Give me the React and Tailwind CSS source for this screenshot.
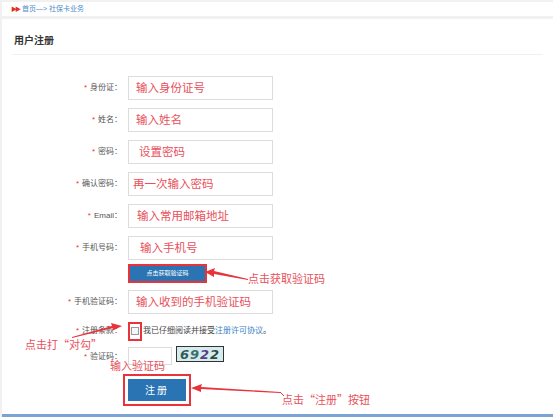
const FONT = { fontFamily: '"Liberation Sans", "Noto Sans CJK SC", sans-serif' }
const CJK = { fontFamily: '"Noto Sans CJK SC", sans-serif' }

const rows = [
  { label: '身份证', ph: '输入身份证号', pl: 'pl-[7px]' },
  { label: '姓名', ph: '输入姓名', pl: 'pl-[7px]' },
  { label: '密码', ph: '设置密码', pl: 'pl-[10px]' },
  { label: '确认密码', ph: '再一次输入密码', pl: 'pl-[4px]' },
  { label: 'Email', ph: '输入常用邮箱地址', pl: 'pl-[8px]' },
  { label: '手机号码', ph: '输入手机号', pl: 'pl-[11px]' },
]

function Label({ children }) {
  return (
    <div className="flex h-full items-center justify-end pr-[6px] text-[8px] text-[#555]">
      <span className="mr-[3px] text-[#e33]">*</span>
      {children}：
    </div>
  )
}

function Field({ ph, pl = 'pl-[7px]' }) {
  return (
    <div className={`flex h-[24px] w-[145px] items-center border border-[#dcdcdc] bg-white text-[11.5px] text-[#e8505b] ${pl}`} style={CJK}>
      {ph}
    </div>
  )
}

function Arrows() {
  return (
    <svg className="pointer-events-none absolute inset-0" width="553" height="417">
      {/* to get-code button */}
      <polygon points="248,280 214,274 214,277 205,272 215,268 214,271 248,279" fill="#e8333b" />
      {/* to checkbox */}
      <polygon points="72,338 113,328 112,331 122,326 111,323 112,326 72,337" fill="#e8333b" />
      {/* to register button */}
      <polygon points="280,393 201,389 201,392 191,388 202,384 201,387 280,392" fill="#e8333b" />
      <line x1="280" y1="392" x2="284" y2="396" stroke="#e8333b" strokeWidth="1" />
    </svg>
  )
}

export default function App() {
  return (
    <div className="relative flex h-[417px] w-[553px] flex-col overflow-hidden bg-[#f1f1f1]" style={FONT}>
      {/* breadcrumb */}
      <div className="ml-[2px] mt-[2px] flex h-[14px] items-center bg-white pl-[9px] text-[7px] text-[#4a8bc9]">
        <span className="mr-[3px] text-[6px] tracking-[-2px] text-[#e0301e]">▶▶</span>
        <span>首页—&gt; 社保卡业务</span>
      </div>

      {/* panel */}
      <div className="ml-[2px] mt-[3px] flex flex-1 flex-col bg-white">
        <div className="mx-[10px] border-b border-[#f0f0f0] pb-[6px] pl-[2px] pt-[15px] text-[10px] leading-[14px] font-bold text-[#333]">
          用户注册
        </div>

        <div className="mt-[21px] grid grid-cols-[126px_1fr] gap-y-[8px]">
          {rows.map(r => (
            <div key={r.label} className="contents">
              <Label>{r.label}</Label>
              <Field ph={r.ph} pl={r.pl} />
            </div>
          ))}

          <div />
          <div className="-mt-[4px] -mb-[1px]">
            <div className="w-[79px] border-2 border-[#e8333b]">
              <div className="flex h-[15px] items-center justify-center bg-[#2a74b3] text-[6px] text-white">
                点击获取验证码
              </div>
            </div>
          </div>

          <Label>手机验证码</Label>
          <Field ph="输入收到的手机验证码" />

          <Label>注册条款</Label>
          <div className="flex h-[18px] items-center text-[8px] text-[#444]">
            <div className="mr-[1px] flex h-[19px] w-[14px] items-center justify-center border-2 border-[#e8333b]">
              <div className="h-[8px] w-[8px] border border-[#999] bg-[#f6f6f6]" />
            </div>
            我已仔细阅读并接受<span className="text-[#3a7fc8]">注册许可协议</span>。
          </div>

          <Label>验证码</Label>
          <div className="-mt-[2px] flex items-start gap-[4px]">
            <div className="mt-[1px] h-[18px] w-[44px] border border-[#dcdcdc]" />
            <div className="flex h-[16px] w-[48px] items-center justify-center border border-[#333] bg-[#d6ecec] text-[13px] font-bold italic leading-none tracking-[1px]" style={{ fontFamily: '"DejaVu Sans", sans-serif' }}>
              <span className="text-[#2f5d5d]">6</span>
              <span className="text-[#3b6f6f]">9</span>
              <span className="text-[#5a3d8a]">2</span>
              <span className="text-[#2d4a4a]">2</span>
            </div>
          </div>
        </div>

        <div className="-mt-[5px] ml-[108px] text-[11px] leading-none text-[#e8505b]" style={CJK}>输入验证码</div>

        <div className="ml-[121px] mt-[3px] w-[68px] border-2 border-[#e8333b] p-[3px]">
          <div className="flex h-[22px] items-center justify-center bg-[#2a74b3] text-[10px] tracking-[2px] text-white">
            注册
          </div>
        </div>

        <div className="flex-1" />
        <div className="h-[3px] bg-[#7aa4d6]" />
      </div>

      {/* annotations */}
      <div className="absolute left-[248px] top-[273px] text-[11px] leading-none text-[#e8505b]" style={CJK}>点击获取验证码</div>
      <div className="absolute left-[25px] top-[339px] text-[11px] leading-none text-[#e8505b]" style={CJK}>点击打“对勾”</div>
      <div className="absolute left-[282px] top-[394px] text-[11px] leading-none text-[#e8505b]" style={CJK}>点击“注册”按钮</div>
      <Arrows />
    </div>
  )
}
